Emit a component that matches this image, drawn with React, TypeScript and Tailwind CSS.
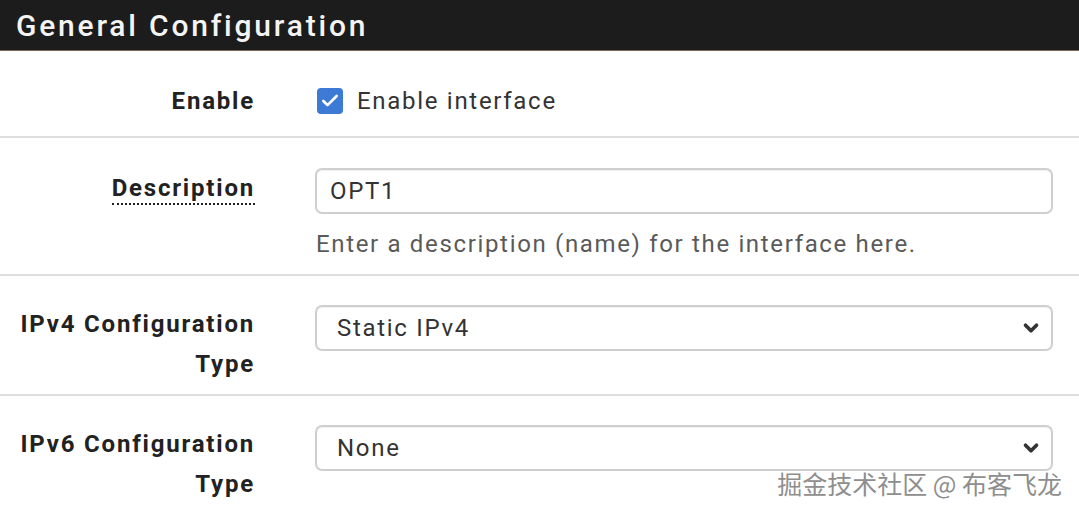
import { Check, ChevronDown } from "lucide-react";

function Label({ children, underline }: { children: React.ReactNode; underline?: boolean }) {
  return (
    <div className="w-[255px] shrink-0 text-right text-[24px] font-bold leading-[40px] tracking-[1.8px] text-[#222]">
      <span className={underline ? "border-b-2 border-dotted border-[#222] pb-[1px]" : ""}>{children}</span>
    </div>
  );
}

function Select({ value }: { value: string }) {
  return (
    <div className="flex h-[46px] items-center justify-between rounded-[7px] border-2 border-[#cfcfcf] bg-white pl-[20px] pr-[9px] text-[24px] tracking-[1.7px] text-[#333] shadow-[inset_0_1px_1px_rgba(0,0,0,0.06)]">
      <span>{value}</span>
      <ChevronDown size={22} strokeWidth={4} className="text-[#333]" />
    </div>
  );
}

export default function App() {
  return (
    <div className="relative h-[513px] w-[1079px] overflow-hidden bg-white font-['Roboto',sans-serif]">
      {/* Panel heading */}
      <div className="flex h-[51px] items-center border-b border-[#7a6a5a] bg-[#1c1c1c] pl-[16px] text-[30px] font-medium tracking-[2.8px] text-[#f4f4f4]">
        General Configuration
      </div>

      {/* Enable */}
      <div className="flex h-[87px] items-center border-b-2 border-[#dedede] pt-[14px]">
        <Label>Enable</Label>
        <div className="ml-[62px] flex items-center gap-[14px]">
          <div className="flex h-[26px] w-[26px] items-center justify-center rounded-[4px] bg-[#3d7ad6]">
            <Check size={20} strokeWidth={3.2} className="text-white" />
          </div>
          <span className="text-[24px] tracking-[1.7px] text-[#333]">Enable interface</span>
        </div>
      </div>

      {/* Description */}
      <div className="flex h-[138px] items-start border-b-2 border-[#dedede]">
        <div className="pt-[30px]">
          <Label underline>Description</Label>
        </div>
        <div className="ml-[60px] mr-[26px] flex-1 pt-[30px]">
          <div className="flex h-[46px] items-center rounded-[7px] border-2 border-[#cfcfcf] bg-white pl-[13px] text-[24px] tracking-[1.7px] text-[#333] shadow-[inset_0_1px_1px_rgba(0,0,0,0.06)]">
            OPT1
          </div>
          <p className="mt-[13px] pl-[1px] text-[24px] leading-[34px] tracking-[1.66px] text-[#5a5a5a]">
            Enter a description (name) for the interface here.
          </p>
        </div>
      </div>

      {/* IPv4 */}
      <div className="flex h-[120px] items-start border-b-2 border-[#dedede]">
        <div className="pt-[28px]">
          <Label>
            IPv4 Configuration
            <br />
            Type
          </Label>
        </div>
        <div className="ml-[60px] mr-[26px] flex-1 pt-[29px]">
          <Select value="Static IPv4" />
        </div>
      </div>

      {/* IPv6 */}
      <div className="flex items-start">
        <div className="pt-[28px]">
          <Label>
            IPv6 Configuration
            <br />
            Type
          </Label>
        </div>
        <div className="ml-[60px] mr-[26px] flex-1 pt-[29px]">
          <Select value="None" />
        </div>
      </div>

      {/* watermark */}
      <div className="absolute bottom-[14px] right-[17px] font-['Noto_Sans_CJK_SC',sans-serif] text-[25px] leading-[32px] text-[#8e8e8e] [text-shadow:0_0_2px_#fff,0_0_2px_#fff,0_0_1px_#fff]">
        掘金技术社区 @ 布客飞龙
      </div>
    </div>
  );
}
